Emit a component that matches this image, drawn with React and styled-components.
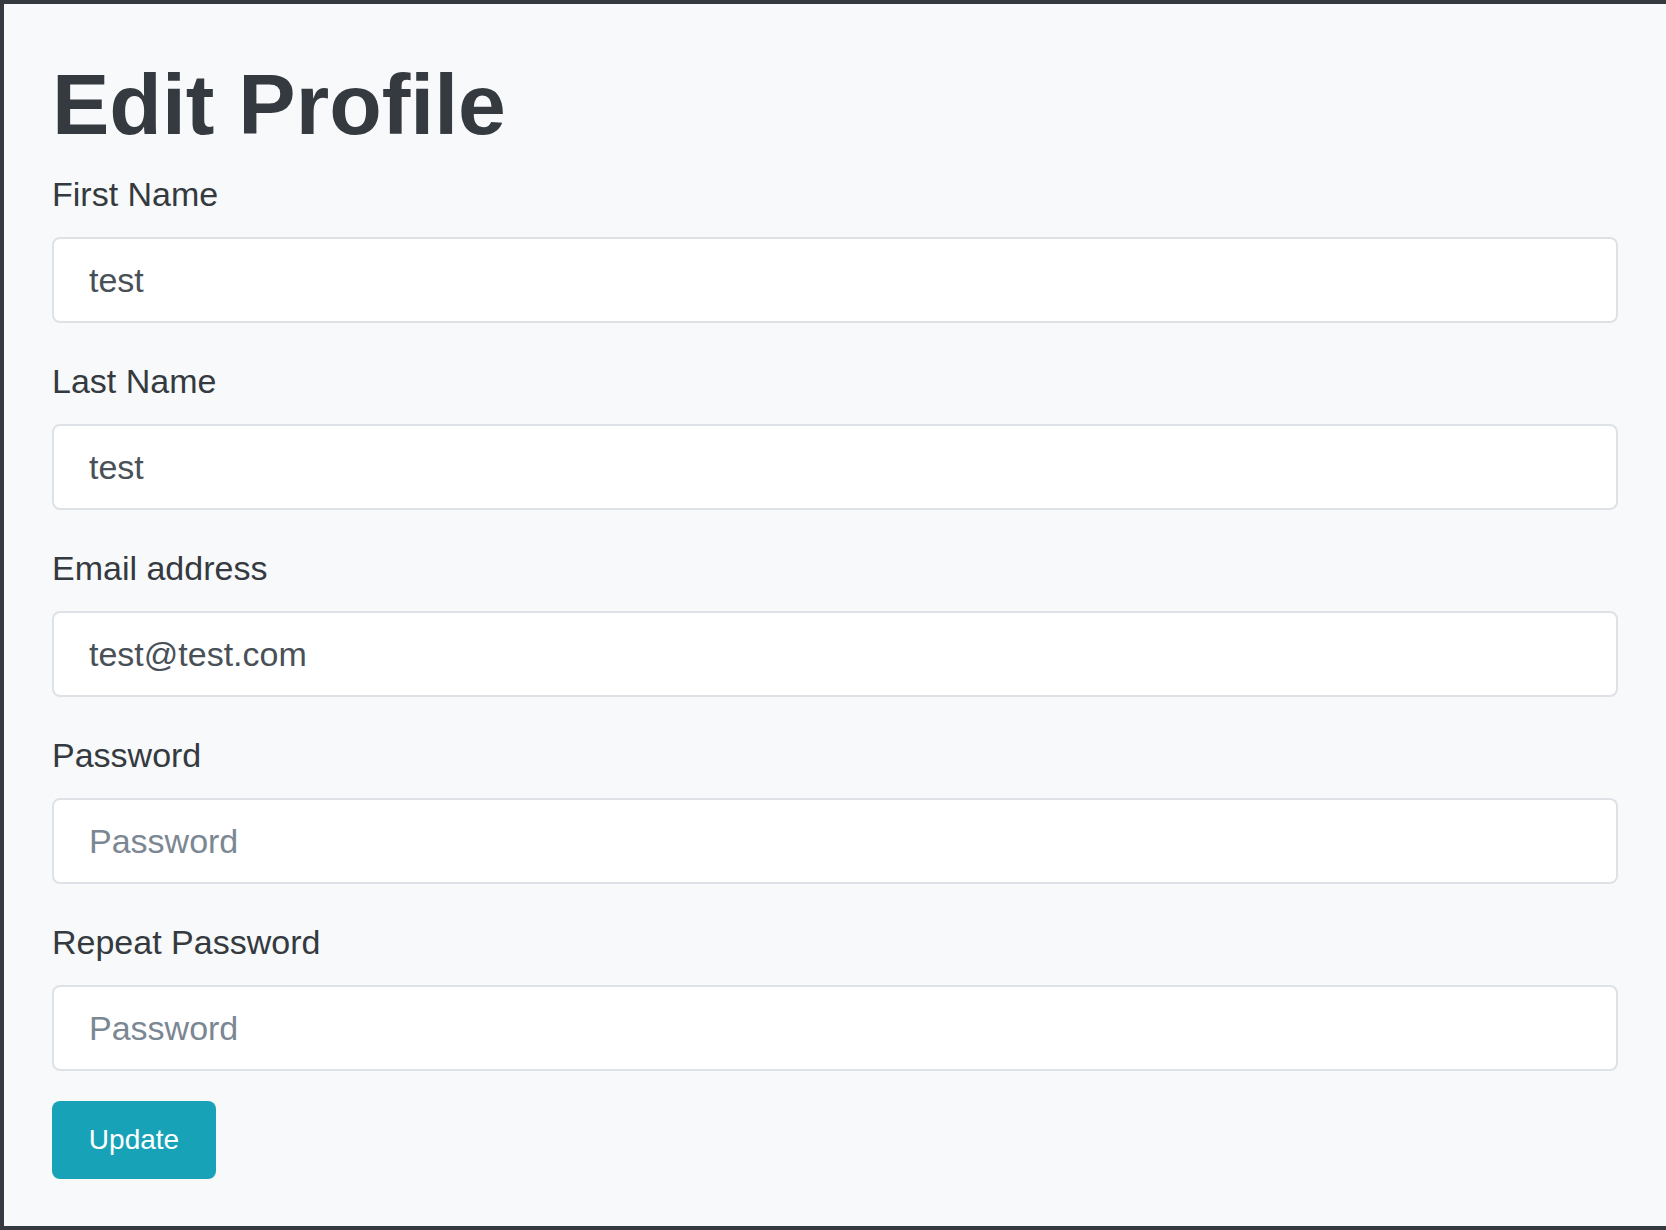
import React from 'react'
import styled, { createGlobalStyle } from 'styled-components'

const GlobalStyle = createGlobalStyle`
  * {
    box-sizing: border-box;
  }
  body {
    margin: 0;
    background: #f8f9fa;
    font-family: 'Liberation Sans', Arial, sans-serif;
  }
`

const fields = [
  { id: 'firstName', label: 'First Name', type: 'text', value: 'test' },
  { id: 'lastName', label: 'Last Name', type: 'text', value: 'test' },
  { id: 'email', label: 'Email address', type: 'email', value: 'test@test.com' },
  { id: 'password', label: 'Password', type: 'password', placeholder: 'Password' },
  { id: 'password2', label: 'Repeat Password', type: 'password', placeholder: 'Password' },
]

const EditProfile = () => {
  return (
    <Wrapper>
      <Title>Edit Profile</Title>
      <form onSubmit={(e) => e.preventDefault()}>
        {fields.map((f) => (
          <Group key={f.id}>
            <Label htmlFor={f.id}>{f.label}</Label>
            <Input
              id={f.id}
              type={f.type}
              defaultValue={f.value}
              placeholder={f.placeholder}
            />
          </Group>
        ))}
        <Button type='submit'>Update</Button>
      </form>
    </Wrapper>
  )
}

const Wrapper = styled.main`
  min-height: 100vh;
  background: #f8f9fa;
  border: 4px solid #343a40;
  border-right: none;
  padding: 49px 48px 44px 48px;
`

const Title = styled.h1`
  margin: 0 0 14px;
  font-size: 86px;
  line-height: 102px;
  font-weight: 700;
  color: #343a40;
`

const Group = styled.div`
  margin-bottom: 33px;
  &:last-of-type {
    margin-bottom: 30px;
  }
`

const Label = styled.label`
  display: block;
  margin-bottom: 17px;
  font-size: 34px;
  line-height: 51px;
  color: #343a40;
`

const Input = styled.input`
  display: block;
  width: 100%;
  height: 86px;
  padding: 0 35px;
  border: 2px solid #dee2e6;
  border-radius: 8px;
  background: #fff;
  font-family: inherit;
  font-size: 34px;
  color: #495057;
  outline: none;
  &::placeholder {
    color: #7b8793;
  }
`

const Button = styled.button`
  display: block;
  width: 164px;
  height: 78px;
  border: none;
  border-radius: 8px;
  background: #17a2b8;
  color: #fff;
  font-family: inherit;
  font-size: 28px;
  cursor: pointer;
`

const App = () => (
  <>
    <GlobalStyle />
    <EditProfile />
  </>
)

export default App
